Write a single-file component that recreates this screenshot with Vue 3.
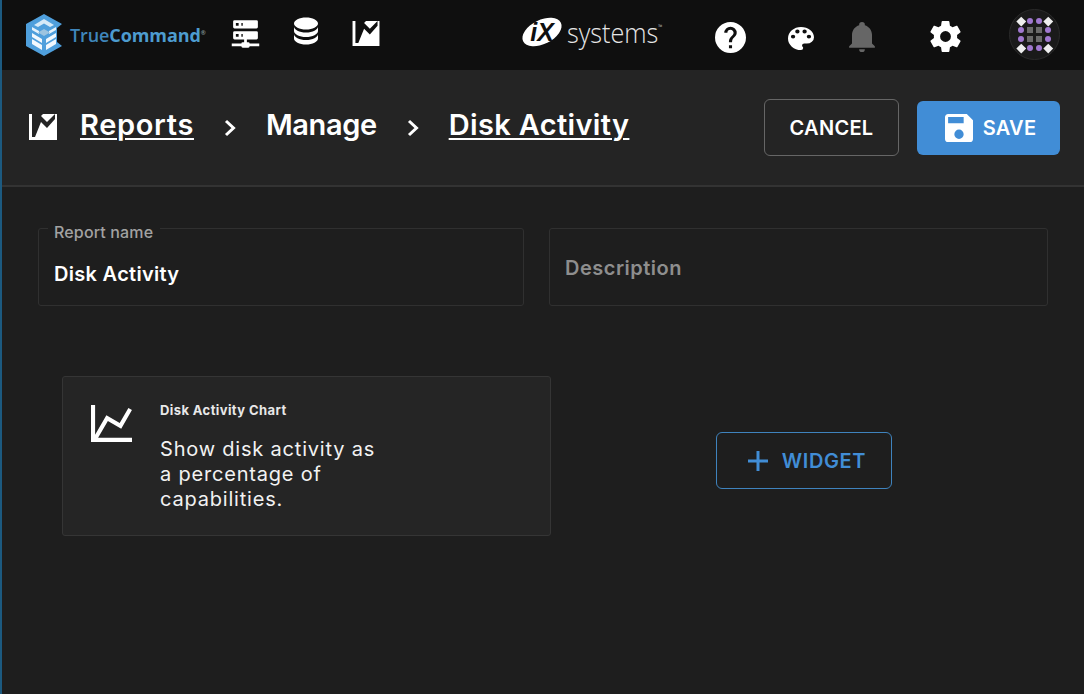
<script setup>
const dots = [
  'd', 'p', 'p', 'd',
  'p', 'g', 'g', 'p',
  'p', 'g', 'g', 'p',
  'd', 'p', 'p', 'd'
]
const reportPath = 'M0 0H28V26H0Z M3 0H14L12 2L18 8L26 0V5L18 14L12 8L6 23H3Z'
</script>

<template>
  <div class="page">
    <header class="topbar">
      <div class="logo">
        <svg class="logo-mark" viewBox="0 0 36 42" width="36" height="42">
          <path d="M18 0 L36 10 L31 14 L31 28 L36 32 L18 42 L0 32 L0 10 Z" fill="#4f9fdc" />
          <path d="M18 5 L28 11 L24 13 L18 9.5 L12 13 L8 11 Z" fill="#d6eaf8" />
          <path d="M6 13 L13 17 L13 20 L6 16 Z M30 13 L23 17 L23 20 L30 16 Z" fill="#e6f2fb" />
          <path d="M18 15 L24 18.5 L18 22 L12 18.5 Z" fill="#9cc4e0" />
          <path d="M6 19 L16 25 L16 29 L6 23 Z M30 19 L20 25 L20 29 L30 23 Z" fill="#f2f8fd" />
          <path d="M6 25 L16 31 L16 36 L6 30 Z M30 25 L20 31 L20 36 L30 30 Z" fill="#f2f8fd" />
        </svg>
        <span class="logo-text">True<b>Command</b><sup>®</sup></span>
      </div>
      <nav class="nav-left">
        <svg class="ic nav-server" viewBox="0 0 24 24"><path d="M13,19H14A1,1 0 0,1 15,20H22V22H15A1,1 0 0,1 14,23H10A1,1 0 0,1 9,22H2V20H9A1,1 0 0,1 10,19H11V17H4A1,1 0 0,1 3,16V12A1,1 0 0,1 4,11H20A1,1 0 0,1 21,12V16A1,1 0 0,1 20,17H13V19M4,3H20A1,1 0 0,1 21,4V8A1,1 0 0,1 20,9H4A1,1 0 0,1 3,8V4A1,1 0 0,1 4,3M9,7H10V5H9V7M9,15H10V13H9V15M5,5V7H7V5H5M5,13V15H7V13H5Z" /></svg>
        <svg class="ic nav-db" viewBox="0 0 24 24"><path d="M12,3C7.58,3 4,4.79 4,7C4,9.21 7.58,11 12,11C16.42,11 20,9.21 20,7C20,4.79 16.42,3 12,3M4,9V12C4,14.21 7.58,16 12,16C16.42,16 20,14.21 20,12V9C20,11.21 16.42,13 12,13C7.58,13 4,11.21 4,9M4,14V17C4,19.21 7.58,21 12,21C16.42,21 20,19.21 20,17V14C20,16.21 16.42,18 12,18C7.58,18 4,16.21 4,14Z" /></svg>
        <svg class="report-ic nav-report" viewBox="0 0 28 26"><path fill-rule="evenodd" :d="reportPath" /></svg>
      </nav>
      <div class="ix">
        <span class="ix-badge"><i>iX</i></span>
        <span class="ix-word">systems<sup>™</sup></span>
      </div>
      <svg class="ic tool-help" viewBox="2 2 20 20"><path d="M15.07,11.25L14.17,12.17C13.45,12.89 13,13.5 13,15H11V14.5C11,13.39 11.45,12.39 12.17,11.67L13.41,10.41C13.78,10.05 14,9.55 14,9C14,7.89 13.1,7 12,7A2,2 0 0,0 10,9H8A4,4 0 0,1 12,5A4,4 0 0,1 16,9C16,9.88 15.64,10.67 15.07,11.25M13,19H11V17H13M12,2A10,10 0 0,0 2,12A10,10 0 0,0 12,22A10,10 0 0,0 22,12C22,6.47 17.5,2 12,2Z" /></svg>
      <svg class="ic tool-palette" viewBox="3 3 18 18" preserveAspectRatio="none"><path d="M17.5,12A1.5,1.5 0 0,1 16,10.5A1.5,1.5 0 0,1 17.5,9A1.5,1.5 0 0,1 19,10.5A1.5,1.5 0 0,1 17.5,12M14.5,8A1.5,1.5 0 0,1 13,6.5A1.5,1.5 0 0,1 14.5,5A1.5,1.5 0 0,1 16,6.5A1.5,1.5 0 0,1 14.5,8M9.5,8A1.5,1.5 0 0,1 8,6.5A1.5,1.5 0 0,1 9.5,5A1.5,1.5 0 0,1 11,6.5A1.5,1.5 0 0,1 9.5,8M6.5,12A1.5,1.5 0 0,1 5,10.5A1.5,1.5 0 0,1 6.5,9A1.5,1.5 0 0,1 8,10.5A1.5,1.5 0 0,1 6.5,12M12,3A9,9 0 0,0 3,12A9,9 0 0,0 12,21A1.5,1.5 0 0,0 13.5,19.5C13.5,19.11 13.35,18.76 13.11,18.5C12.88,18.23 12.73,17.88 12.73,17.5A1.5,1.5 0 0,1 14.23,16H16A5,5 0 0,0 21,11C21,6.58 16.97,3 12,3Z" /></svg>
      <svg class="ic tool-bell" viewBox="3 2 18 21"><path d="M21,19V20H3V19L5,17V11C5,7.9 7.03,5.17 10,4.29C10,4.19 10,4.1 10,4A2,2 0 0,1 12,2A2,2 0 0,1 14,4C14,4.1 14,4.19 14,4.29C16.97,5.17 19,7.9 19,11V17L21,19M14,21A2,2 0 0,1 12,23A2,2 0 0,1 10,21" /></svg>
      <svg class="ic tool-cog" viewBox="2.2 2 19.6 20"><path d="M12,15.5A3.5,3.5 0 0,1 8.5,12A3.5,3.5 0 0,1 12,8.5A3.5,3.5 0 0,1 15.5,12A3.5,3.5 0 0,1 12,15.5M19.43,12.97C19.47,12.65 19.5,12.33 19.5,12C19.5,11.67 19.47,11.34 19.43,11L21.54,9.37C21.73,9.22 21.78,8.95 21.66,8.73L19.66,5.27C19.54,5.05 19.27,4.96 19.05,5.05L16.56,6.05C16.04,5.66 15.5,5.32 14.87,5.07L14.5,2.42C14.46,2.18 14.25,2 14,2H10C9.75,2 9.54,2.18 9.5,2.42L9.13,5.07C8.5,5.32 7.96,5.66 7.44,6.05L4.95,5.05C4.73,4.96 4.46,5.05 4.34,5.27L2.34,8.73C2.21,8.95 2.27,9.22 2.46,9.37L4.57,11C4.53,11.34 4.5,11.67 4.5,12C4.5,12.33 4.53,12.65 4.57,12.97L2.46,14.63C2.27,14.78 2.21,15.05 2.34,15.27L4.34,18.73C4.46,18.95 4.73,19.03 4.95,18.95L7.44,17.94C7.96,18.34 8.5,18.68 9.13,18.93L9.5,21.58C9.54,21.82 9.75,22 10,22H14C14.25,22 14.46,21.82 14.5,21.58L14.87,18.93C15.5,18.67 16.04,18.34 16.56,17.94L19.05,18.95C19.27,19.03 19.54,18.95 19.66,18.73L21.66,15.27C21.78,15.05 21.73,14.78 21.54,14.63L19.43,12.97Z" /></svg>
      <div class="avatar">
        <span v-for="(d, i) in dots" :key="i" class="dot" :class="d"></span>
      </div>
    </header>

    <section class="subheader">
      <svg class="report-ic crumb-ic" viewBox="0 0 28 26"><path fill-rule="evenodd" :d="reportPath" /></svg>
      <a class="crumb link reports">Reports</a>
      <svg class="chev" viewBox="0 0 12 18"><path d="M2 2L9.5 9L2 16" /></svg>
      <span class="crumb manage">Manage</span>
      <svg class="chev" viewBox="0 0 12 18"><path d="M2 2L9.5 9L2 16" /></svg>
      <a class="crumb link activity">Disk Activity</a>
      <button class="btn cancel">CANCEL</button>
      <button class="btn save">
        <svg class="save-ic" viewBox="3 3 18 18"><path d="M15,9H5V5H15M12,19A3,3 0 0,1 9,16A3,3 0 0,1 12,13A3,3 0 0,1 15,16A3,3 0 0,1 12,19M17,3H5C3.89,3 3,3.9 3,5V19A2,2 0 0,0 5,21H19A2,2 0 0,0 21,19V7L17,3Z" /></svg>
        SAVE
      </button>
    </section>

    <main class="main">
      <div class="fields">
        <div class="field name">
          <span class="label">Report name</span>
          <div class="value">Disk Activity</div>
        </div>
        <div class="field desc">Description</div>
      </div>
      <div class="widgets">
        <article class="card">
          <svg class="card-ic" viewBox="2 3 20 18"><path d="M16,11.78L20.24,4.45L21.97,5.45L16.74,14.5L10.23,10.75L5.46,19H22V21H2V3H4V17.54L9.5,8L16,11.78Z" /></svg>
          <div class="card-body">
            <h3>Disk Activity Chart</h3>
            <p>Show disk activity as a percentage of capabilities.</p>
          </div>
        </article>
        <div class="add-wrap">
          <button class="btn add">
            <svg class="plus" viewBox="0 0 22 22"><path d="M11 1V21M1 11H21" /></svg>
            WIDGET
          </button>
        </div>
      </div>
    </main>
  </div>
</template>

<style>
html, body { margin: 0; background: #1e1e1e; }
</style>

<style scoped>
.page {
  box-sizing: border-box;
  width: 1084px;
  height: 694px;
  overflow: hidden;
  border-left: 2px solid #1c5a80;
  background: #1e1e1e;
  color: #fff;
  font-family: "Inter", "Open Sans", sans-serif;
}
.topbar {
  display: flex;
  align-items: center;
  height: 70px;
  background: #0f0f0f;
}
.logo { display: flex; align-items: center; margin-left: 24px; width: 179px; }
.logo-mark { flex: none; }
.logo-text {
  margin-left: 8px;
  font: 600 18px/1 "Open Sans", sans-serif;
  letter-spacing: -0.1px;
  color: #3f86bb;
  white-space: nowrap;
}
.logo-text b { font-weight: 700; color: #4d9ccf; }
.logo-text sup { font-size: 6px; color: #9aa; }
.ic { fill: #fff; display: block; flex: none; }
.nav-left { display: flex; align-items: center; margin-left: 24px; height: 70px; }
.nav-server { width: 33px; height: 33px; margin-bottom: 6px; }
.nav-db { width: 36px; height: 36px; margin-left: 26px; margin-bottom: 8px; }
.report-ic { fill: #fff; display: block; flex: none; }
.nav-report { width: 28px; height: 25px; margin-left: 28px; margin-bottom: 4px; }
.ix {
  display: flex;
  align-items: center;
  margin-left: 141px;
  width: 140px;
  margin-bottom: 6px;
}
.ix-badge {
  display: flex;
  align-items: center;
  justify-content: center;
  width: 42px;
  height: 24px;
  border-radius: 50%;
  background: #fff;
  transform: rotate(-26deg);
  flex: none;
}
.ix-badge i {
  font: italic 700 25px/1 "Liberation Sans", sans-serif;
  letter-spacing: 0;
  color: #0f0f0f;
  transform: rotate(26deg);
}
.ix-word {
  margin-left: 4px;
  font: 300 28px/1 "Open Sans", sans-serif;
  color: #e6e6e6;
  white-space: nowrap;
  transform: scaleX(0.9);
  transform-origin: left center;
}
.ix-word sup { font-size: 6px; vertical-align: 14px; }
.tool-help { width: 31px; height: 31px; margin-left: 54px; margin-top: 4px; }
.tool-palette { width: 26px; height: 23px; margin-left: 42px; margin-top: 6px; }
.tool-bell { width: 26px; height: 30px; margin-left: 35px; fill: #666; margin-top: 3px; }
.tool-cog { width: 31px; height: 31px; margin-left: 55px; margin-top: 2px; }
.avatar {
  box-sizing: border-box;
  display: grid;
  grid-template-columns: repeat(4, 9px);
  grid-auto-rows: 9px;
  place-items: center;
  place-content: center;
  width: 51px;
  height: 51px;
  margin-left: 48px;
  margin-bottom: 1px;
  border-radius: 50%;
  background: #1a1a1a;
  border: 1px solid #2a2a2a;
  flex: none;
}
.dot { display: block; }
.dot.p { width: 6.5px; height: 6.5px; border-radius: 50%; background: #a078d0; }
.dot.g { width: 6px; height: 6px; background: #6a6a6a; }
.dot.d { width: 6.5px; height: 6.5px; background: #eee; transform: rotate(45deg); }

.subheader {
  box-sizing: border-box;
  display: flex;
  align-items: flex-start;
  height: 117px;
  padding-left: 27px;
  background: #242424;
  border-bottom: 2px solid #333;
}
.crumb-ic { width: 28px; height: 26px; margin-top: 44px; }
.crumb {
  margin-top: 36px;
  font: 600 29px/38px "Inter", sans-serif;
  white-space: nowrap;
  color: #fff;
}
.reports { letter-spacing: 0.65px; }
.manage { letter-spacing: -0.4px; }
.activity { letter-spacing: 0.35px; }
.crumb.link { text-decoration: underline; text-decoration-thickness: 2px; text-underline-offset: 3px; }
.crumb-ic + .crumb { margin-left: 23px; }
.chev {
  width: 12px;
  height: 18px;
  margin: 49px 30px 0 30px;
  fill: none;
  stroke: #fff;
  stroke-width: 3;
  flex: none;
}
.btn {
  box-sizing: border-box;
  display: flex;
  align-items: center;
  justify-content: center;
  font: 600 20px/1 "Inter", sans-serif;
  letter-spacing: 0.3px;
  border-radius: 6px;
  cursor: pointer;
}
.cancel {
  width: 135px;
  height: 57px;
  margin-left: auto;
  margin-top: 29px;
  background: transparent;
  border: 1px solid #666;
  color: #fff;
}
.save {
  width: 143px;
  height: 54px;
  margin: 31px 24px 0 18px;
  padding-left: 10px;
  background: #418dd6;
  border: 0;
  color: #fff;
  gap: 10px;
}
.save-ic { width: 28px; height: 28px; fill: #fff; flex: none; }

.main { padding: 41px 36px 0; }
.fields { display: grid; grid-template-columns: 486px 499px; column-gap: 25px; }
.field {
  box-sizing: border-box;
  height: 78px;
  border: 1px solid #303030;
  border-radius: 3px;
}
.name { position: relative; padding: 33px 15px 0; }
.label {
  position: absolute;
  top: -6px;
  left: 9px;
  padding: 0 7px 0 6px;
  background: #1e1e1e;
  font: 500 16px/18px "Inter", sans-serif;
  letter-spacing: 0.15px;
  color: #a2a2a2;
}
.value {
  font: 600 20px/24px "Inter", sans-serif;
  letter-spacing: 0.3px;
  color: #fff;
}
.desc {
  display: flex;
  align-items: center;
  padding: 2px 15px 0;
  font: 600 20px/24px "Inter", sans-serif;
  letter-spacing: 0.5px;
  color: #8e8e8e;
}
.widgets { display: flex; margin-top: 70px; margin-left: 24px; }
.card {
  box-sizing: border-box;
  display: flex;
  width: 489px;
  height: 160px;
  background: #252525;
  border: 1px solid #353535;
  border-radius: 3px;
}
.card-ic { width: 41px; height: 37px; fill: #fff; margin: 28px 0 0 28px; flex: none; }
.card-body { width: 225px; margin-left: 28px; }
.card-body h3 {
  margin: 25px 0 0;
  font: 700 13px/16px "Inter", sans-serif;
  letter-spacing: 0.4px;
  color: #e8e8e8;
}
.card-body p {
  margin: 19px 0 0;
  font: 400 20px/25px "Inter", sans-serif;
  letter-spacing: 0.8px;
  color: #f2f2f2;
}
.add-wrap { flex: 1; display: flex; justify-content: center; padding: 56px 0 0 7px; margin-right: -1px; }
.add {
  width: 176px;
  height: 57px;
  padding-left: 12px;
  background: transparent;
  border: 1px solid #3f83bd;
  color: #418dd6;
  gap: 13px;
  letter-spacing: 0.6px;
}
.plus { width: 22px; height: 22px; fill: none; stroke: #418dd6; stroke-width: 3; flex: none; }
</style>
